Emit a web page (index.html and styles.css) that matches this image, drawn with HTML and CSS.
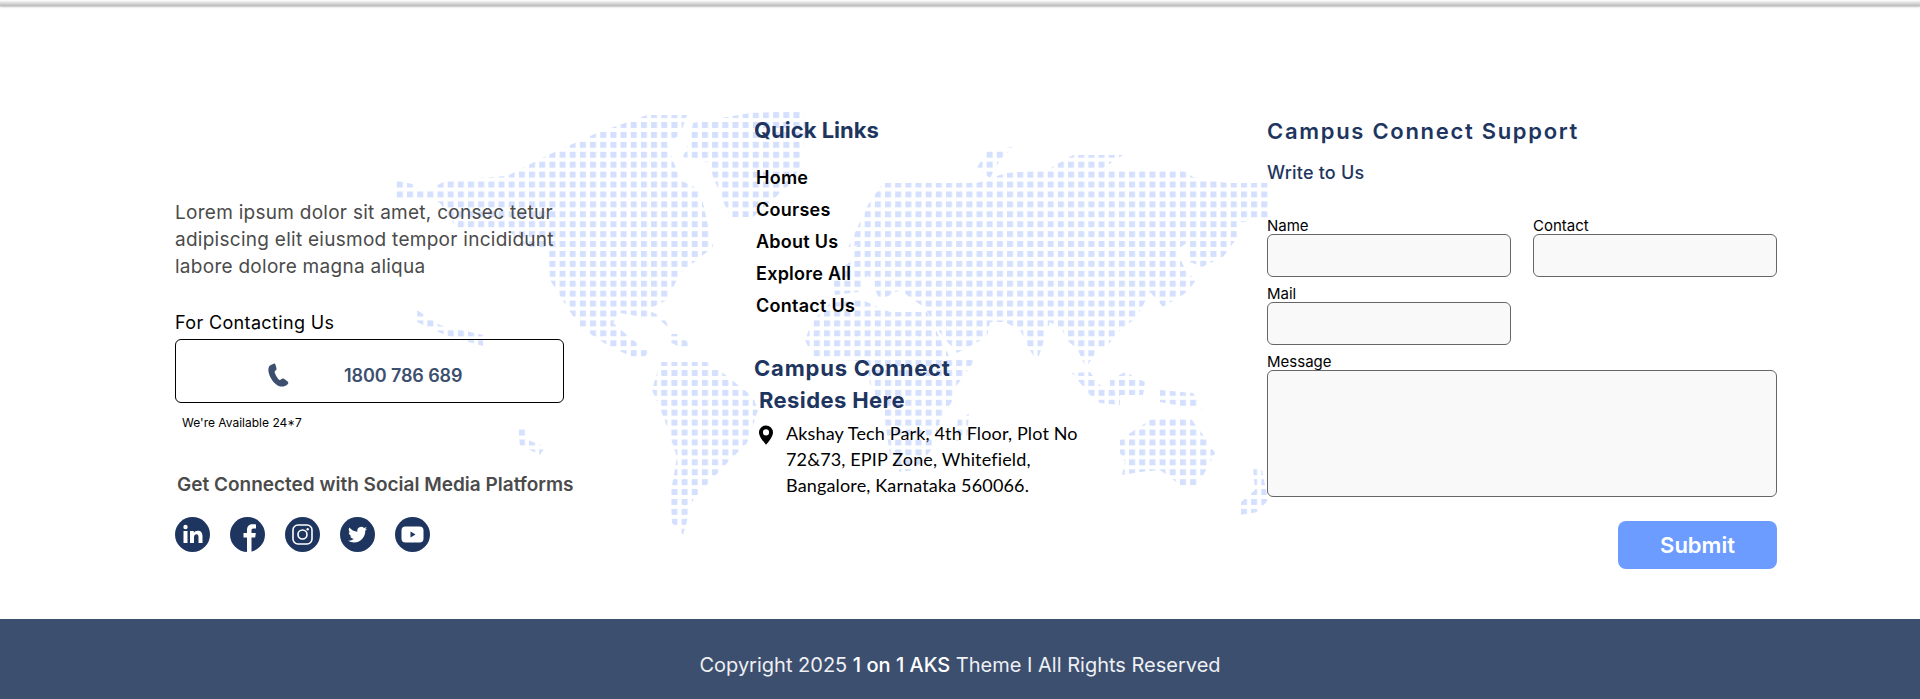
FILE: index.html
```html
<!DOCTYPE html>
<html lang="en">
<head>
    <meta charset="UTF-8">
    <meta name="viewport" content="width=device-width, initial-scale=1.0">
    <title>Campus Connect</title>
    <link rel="stylesheet" href="styles.css">
</head>
<body>
    <div class="top-bar"></div>

    <main class="contact-section">
        <!-- dotted world map behind the columns, drawn in page coordinates -->
        <svg class="world-map" viewBox="390 110 890 430" aria-hidden="true">
            <defs>
                <pattern id="dots" x="885" y="409.700" width="10.170" height="9.920" patternUnits="userSpaceOnUse">
                    <rect width="6" height="6" fill="#d4e0fd"></rect>
                </pattern>
            </defs>
            <g fill="url(#dots)">
                <path d="M395 180L412 184L425 192L447 180L507 176L548 155L597 133L647 115L687 115L680 135L667 143L680 180L700 190L713 247L697 260L680 273L667 300L647 310L663 317L673 332L660 320L620 313L613 323L633 340L650 352L640 360L610 347L580 327L567 307L550 280L548 247L530 250L507 229L457 229L440 203L433 200L395 199Z"></path>
                <path d="M693 123L750 113L800 111L807 123L800 167L787 187L753 217L730 217L713 177L710 163L683 157L690 140Z"></path>
                <path d="M417 310L440 325L483 335L483 346L445 335L417 322Z"></path>
                <path d="M518 428L526 426L528 440L545 447L540 455L520 445Z"></path>
                <path d="M660 362L707 362L723 373L753 397L758 410L747 443L727 463L702 490L693 500L683 535L672 523L670 497L677 457L664 418L652 390Z"></path>
                <path d="M668 334L680 334L690 345L700 350L685 350L670 342Z"></path>
                <path d="M860 222L868 205L883 183L977 183L990 178L1007 173L1047 170L1073 155L1123 155L1100 170L1183 170L1193 177L1227 183L1268 183L1268 218L1237 223L1237 238L1223 257L1202 267L1190 262L1187 243L1176 250L1187 273L1196 280L1187 292L1163 307L1150 292L1137 317L1117 333L1108 345L1097 350L1086 368L1078 350L1067 340L1062 330L1050 322L1037 362L1027 345L1020 330L1005 322L990 322L987 337L957 353L940 333L925 308L900 290L880 300L868 275L858 292L835 295L833 275L850 262L857 245L847 250L860 222Z"></path>
                <path d="M977 168L987 150L1013 147L1000 160L990 178Z"></path>
                <path d="M812 322L830 303L862 300L890 312L927 312L950 358L975 360L957 385L953 400L940 420L935 445L915 470L900 472L890 455L885 420L870 385L867 362L813 357L805 340Z"></path>
                <path d="M958 418L969 414L967 438L956 441Z"></path>
                <path d="M1072 373L1090 372L1100 385L1120 395L1120 405L1100 403L1090 395Z"></path>
                <path d="M1110 380L1125 372L1145 382L1143 395L1110 395Z"></path>
                <path d="M1160 390L1193 393L1203 410L1160 402Z"></path>
                <path d="M1120 440L1130 433L1150 420L1160 417L1190 417L1197 427L1207 440L1215 453L1208 467L1197 485L1180 485L1160 470L1140 472L1122 475L1125 462L1120 453Z"></path>
                <path d="M1253 467L1262 470L1268 500L1258 512L1240 515L1240 503L1255 490Z"></path>
            </g>
        </svg>

        <section class="col-about">
            <p class="about-text">Lorem ipsum dolor sit amet, consec tetur<br>adipiscing elit eiusmod tempor incididunt<br>labore dolore magna aliqua</p>
            <h3 class="contact-label">For Contacting Us</h3>
            <div class="phone-box">
                <svg class="phone-icon" viewBox="0 0 24 24"><path d="M8 1.5L5 3C2.5 4.500 2.500 9 5 14C8 20 13 23.500 17 22.500C19 22 21 21 21.500 19.500C21.800 18.500 21 18 20 17.200L17.500 15.500C16.500 15 15.800 15.300 15 16C14 17 13 17 12 15.500C10.500 13.500 9.500 11.500 9 10C8.700 8.800 9.300 8.300 10 7.700C10.800 7 10.700 6.300 10.500 5.500L9.700 2.500C9.400 1.500 8.800 1.200 8 1.500Z"></path></svg>
                <span class="phone-number">1800 786 689</span>
            </div>
            <p class="available">We're Available 24*7</p>
            <h3 class="social-title">Get Connected with Social Media Platforms</h3>
            <div class="social-icons">
                <svg viewBox="0 0 35 35"><circle cx="17.500" cy="17.500" r="17.500" fill="#1e3560"></circle><circle cx="10.500" cy="10" r="2.200" fill="#fff"></circle><rect x="8.500" y="14" width="4" height="12" rx="0.500" fill="#fff"></rect><path fill="#fff" d="M15 14h3.800v1.800c.8-1.300 2.200-2.100 3.900-2.100 3.300 0 4.800 2 4.800 5.500V26h-4v-6c0-1.700-.6-2.800-2-2.800s-2.500 1.100-2.500 2.900V26h-4z"></path></svg>
                <svg viewBox="0 0 35 35"><circle cx="17.500" cy="17.500" r="17.500" fill="#1e3560"></circle><path fill="#fff" d="M17 35V20.500h-3.500V16H17v-3c0-3.700 2.200-5.700 5.600-5.700 1.400 0 2.600.1 3.400.2v4h-2.400c-1.800 0-2.100.9-2.100 2.200V16h4.300l-.6 4.500h-3.700V35z"></path></svg>
                <svg viewBox="0 0 35 35"><circle cx="17.500" cy="17.500" r="17.500" fill="#1e3560"></circle><rect x="8" y="8" width="19" height="19" rx="5" fill="none" stroke="#fff" stroke-width="1.600"></rect><circle cx="17.500" cy="17.500" r="4.500" fill="none" stroke="#fff" stroke-width="1.600"></circle><circle cx="22.700" cy="12.300" r="1.200" fill="#fff"></circle></svg>
                <svg viewBox="0 0 35 35"><circle cx="17.500" cy="17.500" r="17.500" fill="#1e3560"></circle><path transform="translate(8 8) scale(.8)" fill="#fff" d="M23.950 4.570a10 10 0 0 1-2.820.77 4.960 4.960 0 0 0 2.160-2.720c-.95.55-2 .96-3.130 1.200a4.920 4.920 0 0 0-8.380 4.480C7.690 8.100 4.070 6.130 1.640 3.160a4.820 4.820 0 0 0-.67 2.480c0 1.710.87 3.210 2.190 4.100a4.900 4.900 0 0 1-2.230-.61v.06c0 2.390 1.700 4.380 3.950 4.830a4.900 4.900 0 0 1-2.220.08 4.930 4.930 0 0 0 4.600 3.420A9.870 9.870 0 0 1 0 19.540a13.940 13.940 0 0 0 7.550 2.210c9.050 0 14-7.500 14-13.980 0-.21 0-.42-.02-.63A9.940 9.940 0 0 0 24 4.590z"></path></svg>
                <svg viewBox="0 0 35 35"><circle cx="17.500" cy="17.500" r="17.500" fill="#1e3560"></circle><rect x="6.500" y="9.500" width="22" height="16" rx="4" fill="#fff"></rect><path fill="#1e3560" d="M15.500 14.500v6l5-3z"></path></svg>
            </div>
        </section>

        <section class="col-links">
            <h2 class="links-title">Quick Links</h2>
            <ul class="quick-links">
                <li>Home</li>
                <li>Courses</li>
                <li>About Us</li>
                <li>Explore All</li>
                <li>Contact Us</li>
            </ul>
            <h2 class="resides-title">Campus Connect<span>Resides Here</span></h2>
            <div class="address">
                <svg class="pin-icon" viewBox="0 0 16 22"><path fill-rule="evenodd" d="M8 0a8 8 0 0 0-8 8c0 5.500 8 14 8 14s8-8.500 8-14a8 8 0 0 0-8-8zm0 11.500a3.500 3.500 0 1 1 0-7 3.500 3.500 0 0 1 0 7z"></path></svg>
                <p>Akshay Tech Park, 4th Floor, Plot No<br>72&amp;73, EPIP Zone, Whitefield,<br>Bangalore, Karnataka 560066.</p>
            </div>
        </section>

        <section class="col-form">
            <h2 class="form-title">Campus Connect Support</h2>
            <h3 class="form-subtitle">Write to Us</h3>
            <form class="support-form">
                <div class="field">
                    <label for="name">Name</label>
                    <input type="text" id="name">
                </div>
                <div class="field">
                    <label for="contact">Contact</label>
                    <input type="text" id="contact">
                </div>
                <div class="field">
                    <label for="mail">Mail</label>
                    <input type="text" id="mail">
                </div>
                <div class="field field-wide">
                    <label for="message">Message</label>
                    <textarea id="message"></textarea>
                </div>
                <div class="field-wide form-actions">
                    <button type="button" class="submit-btn">Submit</button>
                </div>
            </form>
        </section>
    </main>

    <footer class="site-footer">Copyright 2025 <strong>1 on 1 AKS</strong> Theme I All Rights Reserved</footer>
</body>
</html>
```

FILE: styles.css
```css
* {
    box-sizing: border-box;
}
body {
    margin: 0;
    font-family: 'Inter', 'Noto Sans', sans-serif;
    background: #fff;
    color: #000;
}
h2, h3, p, ul {
    margin: 0;
    padding: 0;
}
.top-bar {
    height: 6px;
    background: linear-gradient(#fff, #b9b9b9);
    box-shadow: 0 1px 2px rgba(0, 0, 0, 0.25);
}
.contact-section {
    position: relative;
    height: 613px;
    padding: 109px 143px 0 175px;
    display: grid;
    grid-template-columns: 579px 513px 1fr;
    overflow: hidden;
}
.contact-section section {
    position: relative;
}
.world-map {
    position: absolute;
    left: 390px;
    top: 104px;
    width: 890px;
    height: 430px;
}

/* left column */
.col-about {
    padding-top: 84px;
}
.about-text {
    font-size: 19px;
    line-height: 27px;
    color: #4b4b4b;
    letter-spacing: 0.27px;
    white-space: nowrap;
}
.contact-label {
    margin-top: 29px;
    font-size: 18px;
    line-height: 27px;
    font-weight: 400;
    letter-spacing: 0.35px;
}
.phone-box {
    margin-top: 3px;
    width: 389px;
    height: 64px;
    border: 1px solid #000;
    border-radius: 6px;
    display: flex;
    align-items: center;
    padding: 8px 0 0 89px;
    gap: 53px;
}
.phone-icon {
    width: 26px;
    height: 26px;
    fill: #3c4f6f;
}
.phone-number {
    font-size: 18px;
    font-weight: 600;
    color: #3c4f6f;
    letter-spacing: -0.1px;
}
.available {
    margin-top: 11px;
    padding-left: 7px;
    font-size: 12px;
    line-height: 18px;
}
.social-title {
    margin-top: 39px;
    padding-left: 2px;
    font-size: 19px;
    line-height: 27px;
    font-weight: 600;
    color: #4b4b4b;
    white-space: nowrap;
}
.social-icons {
    margin-top: 19px;
    display: flex;
    gap: 20px;
}
.social-icons svg {
    width: 35px;
    height: 35px;
}

/* middle column */
.links-title {
    font-size: 22px;
    line-height: 30px;
    font-weight: 700;
    color: #1e3560;
}
.quick-links {
    margin-top: 17px;
    padding-left: 2px;
    list-style: none;
}
.quick-links li {
    font-size: 18px;
    line-height: 32px;
    font-weight: 600;
    letter-spacing: 0.25px;
}
.resides-title {
    margin-top: 30px;
    font-size: 22px;
    line-height: 32px;
    font-weight: 700;
    color: #1e3560;
    letter-spacing: 0.8px;
}
.resides-title span {
    display: block;
    padding-left: 5px;
    letter-spacing: 0.4px;
}
.address {
    margin-top: 4px;
    padding-left: 5px;
    display: flex;
    align-items: flex-start;
    gap: 13px;
    font-family: 'Lato', sans-serif;
    font-size: 18px;
    line-height: 26px;
    letter-spacing: 0.15px;
}
.pin-icon {
    flex: none;
    width: 14px;
    height: 20px;
    margin-top: 5px;
}

/* right column */
.col-form {
    padding-top: 1px;
}
.form-title {
    font-size: 22px;
    line-height: 30px;
    font-weight: 600;
    color: #1e3560;
    letter-spacing: 1.7px;
}
.form-subtitle {
    margin-top: 13px;
    font-size: 18px;
    line-height: 27px;
    font-weight: 500;
    color: #1e3560;
    letter-spacing: 0.2px;
}
.support-form {
    margin-top: 30px;
    display: grid;
    grid-template-columns: 244px 244px;
    column-gap: 22px;
    row-gap: 7px;
}
.field label {
    display: block;
    padding-top: 1px;
    font-size: 15px;
    line-height: 17px;
}
.field input,
.field textarea {
    display: block;
    width: 100%;
    background: #f9f9f9;
    border: 1px solid #666;
    border-radius: 6px;
    padding: 6px 10px;
}
.field input {
    height: 43px;
}
.field textarea {
    height: 127px;
    resize: none;
}
.field-wide {
    grid-column: 1 / 3;
}
.form-actions {
    margin-top: 17px;
    display: flex;
    justify-content: flex-end;
}
.submit-btn {
    width: 159px;
    height: 48px;
    background: #6c9cff;
    color: #fff;
    border: none;
    border-radius: 8px;
    font-family: inherit;
    font-size: 22px;
    font-weight: 600;
}

.site-footer {
    height: 80px;
    padding-top: 12px;
    background: #3c4f6f;
    color: #eef0f4;
    text-align: center;
    font-size: 20px;
    line-height: 68px;
}
.site-footer strong {
    color: #fff;
    font-weight: 500;
}
```
